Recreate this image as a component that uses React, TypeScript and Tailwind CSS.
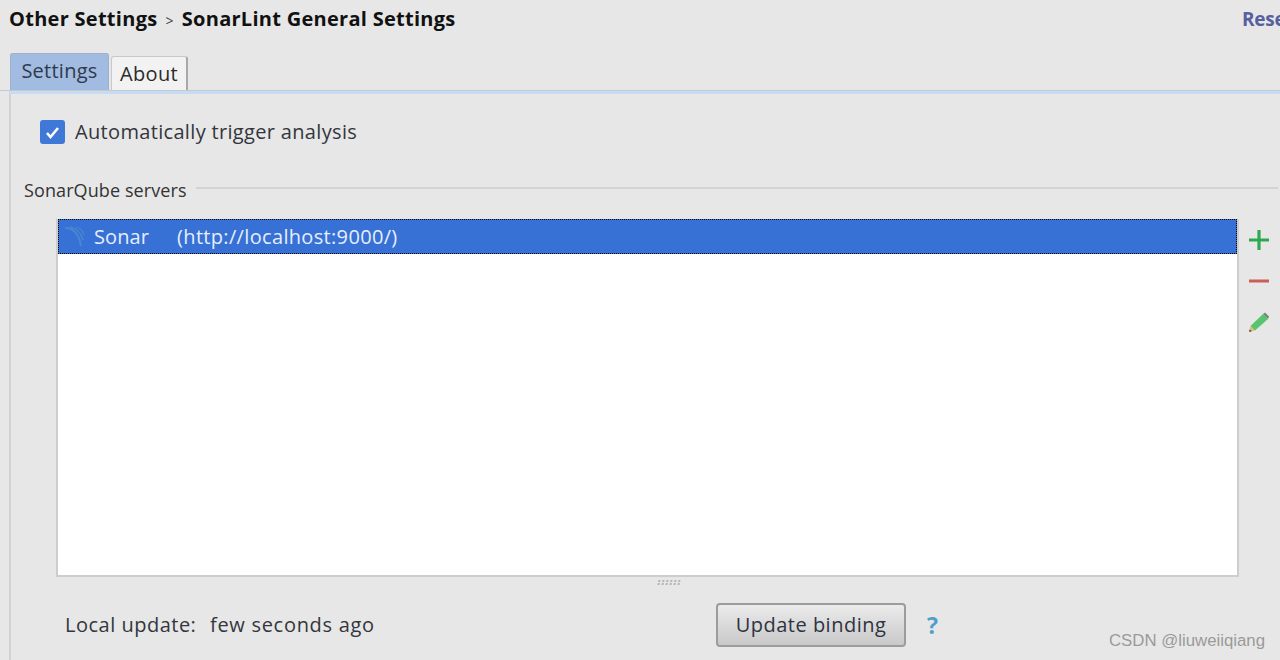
import { useState } from "react";

const uiFont = "[font-family:'Open_Sans','Noto_Sans',sans-serif]";

function SonarIcon() {
  return (
    <svg width="26" height="26" viewBox="0 0 26 26" fill="none" className="text-[#4a86cf]">
      <path d="M3 4c8 0 14 6 16 18" stroke="currentColor" strokeWidth="2" />
      <path d="M8 3c6 1 11 6 13 13" stroke="currentColor" strokeWidth="1.5" />
      <path d="M14 3c4 1 7 4 8 8" stroke="currentColor" strokeWidth="1.2" />
    </svg>
  );
}

function PencilIcon() {
  return (
    <svg width="24" height="24" viewBox="0 0 24 24" fill="none">
      <path d="M2 22l1.5-6 4.500 4.500z" fill="#e8b878" />
      <path d="M2 22l.7-2.800 2.100 2.100z" fill="#555" />
      <path d="M3.500 16L16 4l5 5L8 20.500z" fill="#58c46c" />
      <path d="M16 4l2-1.500 4 4L21 9z" fill="#6f8a76" />
    </svg>
  );
}

function Grip() {
  return (
    <div className="grid grid-cols-[repeat(6,2px)] gap-x-[2px] gap-y-[1px] -skew-x-12">
      {Array.from({ length: 12 }).map((_, i) => (
        <span key={i} className="w-[2px] h-[2px] bg-[#b4b4b4]" />
      ))}
    </div>
  );
}

export default function App() {
  const [autoTrigger, setAutoTrigger] = useState(true);

  return (
    <div className={`relative w-[1280px] h-[660px] overflow-hidden bg-[#e7e7e7] text-[#333] ${uiFont}`}>
      {/* header */}
      <div className="h-[53px] pl-[9px] pt-[5px] flex items-start justify-between">
        <div className="flex items-center h-[28px] text-[20px] font-bold text-[#111] tracking-[0.28px]">
          <span>Other Settings</span>
          <span className="mx-[8px] text-[14px] font-normal text-[#444] mt-[3px]">&gt;</span>
          <span>SonarLint General Settings</span>
        </div>
        <span className="w-[38px] overflow-hidden h-[28px] leading-[28px] text-[19px] font-bold text-[#56609f] tracking-[-0.2px]">
          Reset
        </span>
      </div>

      {/* tabs */}
      <div className="flex items-end pl-[10px] h-[37px]">
        <div className="w-[99px] h-[37px] rounded-t-[3px] bg-[#a2bbe0] border-t border-x border-[#9fb2cc] flex items-center justify-center text-[20px] text-[#2e3a4c] tracking-[0.25px] pb-[3px]">
          Settings
        </div>
        <div className="ml-[2px] w-[77px] h-[34px] rounded-t-[3px] bg-[#f2f2f2] border-t border-l border-[#c9c9c9] border-r-2 border-r-[#a8a8a8] flex items-center justify-center text-[20px] text-[#2b2b2b] tracking-[0.3px]">
          About
        </div>
      </div>
      <div className="h-[1px] bg-[#c8c8c8]" />
      <div className="h-[3px] ml-[9px] bg-[#c6dcf4]" />

      {/* panel */}
      <div className="ml-[9px] border-l-2 border-[#d2d2d2] h-[566px] pt-[26px]">
        <label className="ml-[29px] h-[24px] flex items-center w-fit">
          <input
            type="checkbox"
            checked={autoTrigger}
            onChange={(e) => setAutoTrigger(e.target.checked)}
            className="sr-only"
          />
          <span className="w-[25px] h-[24px] rounded-[3px] bg-[#3f78d6] flex items-center justify-center">
            {autoTrigger && (
              <svg width="15" height="13" viewBox="0 0 15 13" fill="none">
                <path d="M2 7l3.500 4L13 2" stroke="#fff" strokeWidth="2.600" />
              </svg>
            )}
          </span>
          <span className="ml-[10px] text-[20px] leading-[24px] text-[#33363c] tracking-[0.33px]">
            Automatically trigger analysis
          </span>
        </label>

        {/* group title */}
        <div className="mt-[33px] ml-[13px] flex items-center h-[26px]">
          <span className="text-[18px] text-[#333] tracking-[0.1px]">SonarQube servers</span>
          <div className="ml-[9px] mb-[4px] h-[2px] w-[1082px] bg-[#d3d3d3]" />
        </div>

        {/* server list */}
        <div className="mt-[16px] ml-[45px] flex">
          <div className="w-[1183px] h-[358px] bg-white border-2 border-[#cdcdcd] border-t-0">
            <div className="h-[35px] bg-[#3771d6] border border-dotted border-black flex items-center text-[#e6eefb] text-[20px]">
              <span className="ml-[3px] w-[32px] shrink-0">
                <SonarIcon />
              </span>
              <span className="tracking-[0.1px]">Sonar</span>
              <span className="ml-[28px] tracking-[0.33px]">(http://localhost:9000/)</span>
            </div>
          </div>
          <div className="flex flex-col items-center pl-[10px] pt-[10px] w-[30px]">
            <svg width="20" height="22" viewBox="0 0 20 22" fill="none" className="shrink-0">
              <path d="M10 1v20M0 11h20" stroke="#2fa84f" strokeWidth="3.200" />
            </svg>
            <svg width="20" height="4" viewBox="0 0 20 4" className="mt-[28px] shrink-0">
              <rect width="20" height="3" y="0.500" fill="#cc5f55" />
            </svg>
            <span className="mt-[27px]">
              <PencilIcon />
            </span>
          </div>
        </div>

        {/* resize grip */}
        <div className="mt-[3px] ml-[647px] w-[26px] h-[8px]">
          <Grip />
        </div>

        {/* status row */}
        <div className="mt-[15px] ml-[54px] flex items-center h-[44px] text-[20px] text-[#33363c] tracking-[0.5px]">
          <span className="w-[145px]">Local update:</span>
          <span className="w-[506px] tracking-[0.7px]">few seconds ago</span>
          <button className="w-[190px] h-[44px] rounded-[4px] border-2 border-[#9c9c9c] bg-gradient-to-b from-[#ebebeb] to-[#c9c9c9] text-[20px] text-[#2e3340]">
            Update binding
          </button>
          <span className="ml-[21px] text-[23px] font-bold text-[#4f9fcb]">?</span>
        </div>
      </div>

      {/* watermark */}
      <span className="absolute left-[1109px] top-[630px] text-[16.800px] leading-[22px] text-[#9a9a9a] [font-family:'Liberation_Sans',sans-serif]">
        CSDN @liuweiiqiang
      </span>
    </div>
  );
}
